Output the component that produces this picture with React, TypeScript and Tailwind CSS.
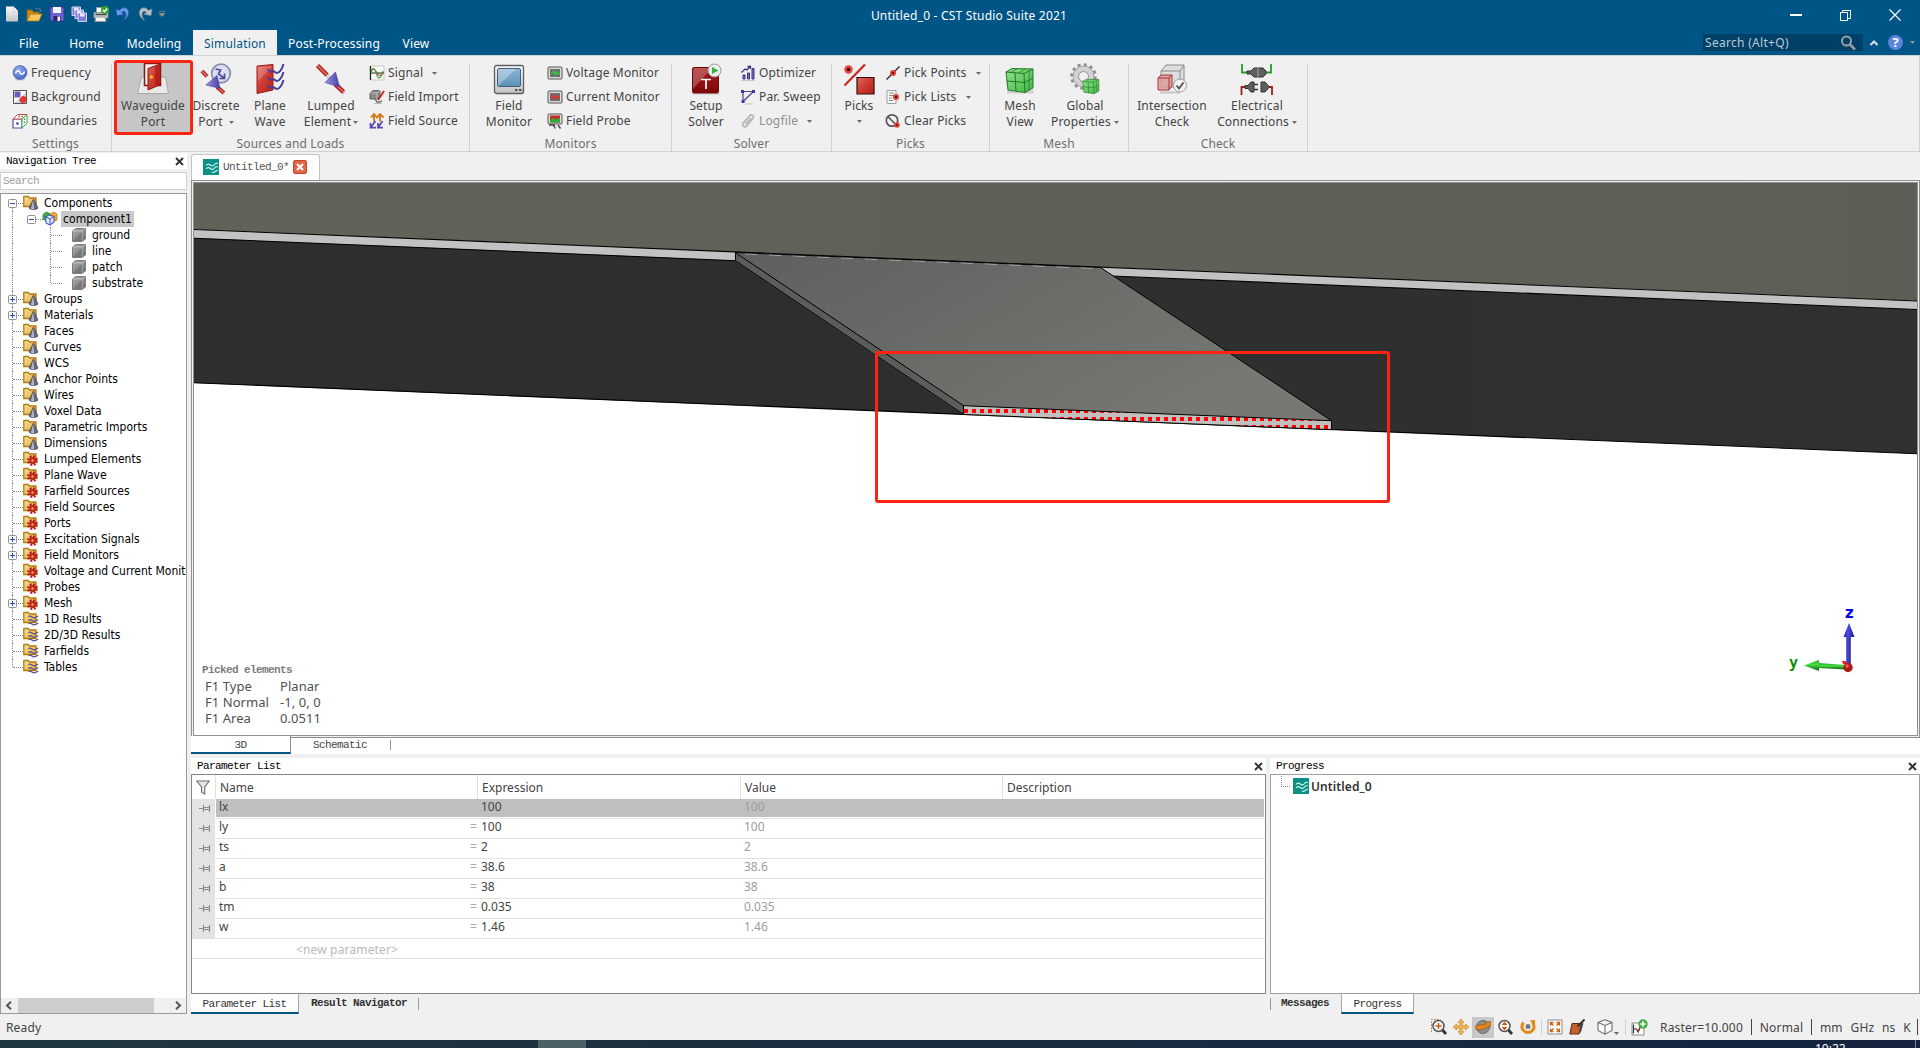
import React, { ReactNode } from "react";

const UI = "font-['Noto_Sans','Noto_Sans_CJK_SC',sans-serif]";
const MONO = "font-['Liberation_Mono','Noto_Sans_CJK_SC',monospace] text-[11px] tracking-[-0.6px]";
const TREE = "font-['DejaVu_Sans_Condensed','DejaVu_Sans',sans-serif] text-[12px]";

function Defs() {
  return (
    <svg className="absolute h-0 w-0">
      <defs>
        <linearGradient id="red" x1="0" y1="0" x2="1" y2="1">
          <stop offset="0" stopColor="#dd6a62" />
          <stop offset=".5" stopColor="#cc3a30" />
          <stop offset="1" stopColor="#b3221c" />
        </linearGradient>
        <linearGradient id="darkred" x1="0" y1="0" x2="0" y2="1">
          <stop offset="0" stopColor="#a81a1a" />
          <stop offset="1" stopColor="#7d0808" />
        </linearGradient>
        <linearGradient id="folder" x1="0" y1="0" x2="1" y2="1">
          <stop offset="0" stopColor="#fbe3a0" />
          <stop offset="1" stopColor="#e0a63a" />
        </linearGradient>
        <linearGradient id="screen" x1="0" y1="0" x2="0" y2="1">
          <stop offset="0" stopColor="#8fb4d6" />
          <stop offset="1" stopColor="#5a92b4" />
        </linearGradient>
        <linearGradient id="gray" x1="0" y1="0" x2="0" y2="1">
          <stop offset="0" stopColor="#fafafa" />
          <stop offset="1" stopColor="#c4c4c4" />
        </linearGradient>
        <linearGradient id="green" x1="0" y1="0" x2="1" y2="1">
          <stop offset="0" stopColor="#8fe28f" />
          <stop offset="1" stopColor="#45b545" />
        </linearGradient>
        <linearGradient id="cone" x1="0" y1="0" x2="1" y2="0">
          <stop offset="0" stopColor="#9a94e0" />
          <stop offset="1" stopColor="#4a3fa8" />
        </linearGradient>
        <radialGradient id="orb" cx="0.4" cy="0.3" r="0.8">
          <stop offset="0" stopColor="#93acf0" />
          <stop offset="1" stopColor="#3d5fc0" />
        </radialGradient>
        <linearGradient id="darkcube" x1="0" y1="0" x2="1" y2="1">
          <stop offset="0" stopColor="#b0b0b0" />
          <stop offset="1" stopColor="#6c6c6c" />
        </linearGradient>
      </defs>
    </svg>
  );
}

function Ico({ s = 16, children }: { s?: number; children: ReactNode }) {
  return (
    <svg width={s} height={s} viewBox={`0 0 ${s} ${s}`} fill="none" className="block shrink-0">
      {children}
    </svg>
  );
}

function Caret({ className = "" }: { className?: string }) {
  return (
    <svg width="5" height="3" viewBox="0 0 5 3" className={`block shrink-0 ${className}`}>
      <path d="M0 0h5L2.500 3z" fill="#6b6b6b" />
    </svg>
  );
}

/* ---------- quick access icons ---------- */
const IcNew = (
  <Ico>
    <path d="M2 .5h7.500L14 5v10.500H2z" fill="url(#gray)" />
    <path d="M9.500.5V5H14z" fill="#fff" stroke="#aaa" strokeWidth=".5" />
  </Ico>
);
const IcOpen = (
  <Ico s={17}>
    <path d="M1 15V4h5l1.500 2H13v3" fill="#c98a16" stroke="#8f6210" strokeWidth=".8" />
    <path d="M1 15 4.500 8H16l-3 7z" fill="#f6c65a" stroke="#a87412" strokeWidth=".8" />
    <path d="M9.500 3.500c2-2.500 4.500-1.500 5 1" stroke="#4a6f94" strokeWidth="1.300" />
    <path d="M13 4h3.500l-2 2.500z" fill="#4a6f94" />
  </Ico>
);
const IcSave = (
  <Ico>
    <path d="M1 1h14v14H2.500L1 13.500z" fill="#6a63d4" stroke="#3a3490" />
    <path d="M4 1h8v6H4z" fill="#f4f4ff" />
    <path d="M4.500 10h7v5h-7z" fill="#2c2868" />
    <path d="M8.500 10.500h2.500V15H8.500z" fill="#f2f2f2" />
  </Ico>
);
const IcSaveAll = (
  <Ico>
    {[0, 3, 6].map((o) => (
      <g key={o} transform={`translate(${o} ${o})`}>
        <path d="M1 1h8.500v8.500H1z" fill="#827bd8" stroke="#e3e3f4" strokeWidth=".9" />
        <path d="M3 1.500h4.500v3H3z" fill="#e9e9fb" />
      </g>
    ))}
  </Ico>
);
const IcPrint = (
  <Ico>
    <path d="M3.500 6V1.500h7V6" fill="#fff" stroke="#999" />
    <path d="M1 6.500h14v5.500H1z" fill="#cfcfcf" stroke="#8d8d8d" />
    <path d="M3 11h9l1 4.500H2z" fill="#f5f5f5" stroke="#9a9a9a" />
    <path d="M2.500 8.500h11" stroke="#444" strokeWidth="1.500" />
    <circle cx="12" cy="4" r="4" fill="#32a832" />
    <path d="m10 4 1.500 1.700L14.200 2.500" stroke="#fff" strokeWidth="1.500" />
  </Ico>
);
const IcUndo = (
  <Ico>
    <path d="M4.500 4.500C8-.5 14.500 2 13.500 8c-.6 3-2.700 5-5 6.500 1.400-2 2.800-4 2.400-6.700C10.500 4.500 7.800 4.500 6.500 6.500L9 8.300 2 9.500 1 3z" fill="#6b9af0" stroke="#2f5cb4" strokeWidth=".7" />
  </Ico>
);
const IcRedo = (
  <Ico>
    <path d="M11.500 4.500C8-.5 1.500 2 2.500 8c.6 3 2.700 5 5 6.500-1.400-2-2.800-4-2.400-6.700C5.500 4.500 8.200 4.500 9.500 6.500L7 8.300 14 9.500 15 3z" fill="#b9c0c4" stroke="#7e8a90" strokeWidth=".7" />
  </Ico>
);

/* ---------- small ribbon icons ---------- */
const IcFrequency = (
  <Ico>
    <ellipse cx="8" cy="14.500" rx="6" ry="1.200" fill="#ccc" />
    <circle cx="8" cy="7.500" r="7" fill="url(#orb)" stroke="#4a62ad" strokeWidth=".7" />
    <path d="M3.500 8.500C4.500 5 7 5 8 7.500s3.500 2.500 4.500-1" stroke="#fff" strokeWidth="1.500" />
  </Ico>
);
const IcBackground = (
  <Ico>
    <path d="M1.500 1.500h13v13h-13z" fill="#fff" stroke="#555" />
    <path d="M2.500 2.500h6v6h-6z" fill="#6660b8" />
    <path d="M2 14 14 2v7l-5 5z" fill="#cfcfe2" />
    <circle cx="11" cy="10.500" r="3.500" fill="#e03a30" />
    <path d="M3 13.500 13.500 3" stroke="#fff" />
  </Ico>
);
const IcBoundaries = (
  <Ico>
    <path d="M1 6h9v9H1z" fill="#fff" stroke="#5b50b4" strokeWidth="1.200" />
    <path d="M1 6 5.500 1.500H15L10 6z" fill="#fff" stroke="#c24a48" />
    <path d="M10 6l5-4.500V10l-5 5z" fill="#fff" stroke="#3fa048" />
    <path d="M4.300 9.300h2.400v2.400H4.300z" fill="#4a3fae" />
    <path d="M6.500 3.500h1.500M9.500 3.500H11" stroke="#d04040" strokeWidth="1.400" />
    <path d="M12.500 5.500v1.600M12.500 8.500v1.600" stroke="#2f9a3a" strokeWidth="1.400" />
  </Ico>
);
const IcSignal = (
  <Ico>
    <path d="M1 1h14v14H1z" fill="#f7f7f7" stroke="#c9c9c9" />
    <path d="M1.500 1v14M1 8h14" stroke="#222" strokeWidth="1.200" />
    <path d="M2 6c2-5 4-1 6 2s4 4 6.500-1" stroke="#c8302c" strokeWidth="1.200" />
    <path d="M2 8c2-6 4-5 5.500 1S12 14 14 6" stroke="#3fa845" strokeWidth="1.200" />
  </Ico>
);
const IcFieldImport = (
  <Ico>
    <path d="M1 4 4 1.500h7V7L8 10H1z" fill="#8b8b8b" stroke="#4f4f4f" strokeWidth=".8" />
    <path d="M1 4h7v6M8 4l3-2.500" stroke="#c9c9c9" strokeWidth=".8" />
    <path d="m15 2-6 9" stroke="#c0292b" strokeWidth="2" />
    <path d="m5.500 9.500 3 4L13 12" stroke="#7a7a7a" strokeWidth="1.500" />
    <path d="M5 14.500h8" stroke="#bbb" />
  </Ico>
);
const IcFieldSource = (
  <Ico>
    <path d="M5 8.500V2M11 8.500V2M2 4.500 5 1l3 3.500L11 1l3.500 3.500" stroke="#d67a1c" strokeWidth="1.900" />
    <path d="M6.500 8 2 14M1.500 10v4.700H7M13.500 8 9.500 14M9 10v4.700h5" stroke="#5a45b8" strokeWidth="1.700" />
  </Ico>
);
function MonitorSmall({ color, probe }: { color: string; probe?: boolean }) {
  return (
    <Ico>
      <rect x="1" y={probe ? 1 : 2} width="14" height={probe ? 10 : 12} rx="1" fill="#dcdcdc" stroke="#555" />
      <rect x="3" y={probe ? 2.500 : 4} width="10" height={probe ? 7 : 8} fill={probe ? "#c42b2b" : "#6d6d6d"} />
      {probe && <path d="M3 9.500V7l3-2 3 1.500L13 5v4.500z" fill="#2cae39" />}
      {!probe && <path d="M3.500 8.500 5.500 8l1.500-2 1 4 1.500-3 1 1.500h2.500" stroke={color} strokeWidth="1.300" />}
      {probe && <path d="M2 12h6M6.500 12.500l2 3M11 12l2.500 3.500" stroke="#444" strokeWidth="1.300" />}
    </Ico>
  );
}
const IcOptimizer = (
  <Ico>
    <path d="M1 15.500h14" stroke="#c9c9c9" />
    <path d="M3 10h2v4H3zM7.500 8h2v6h-2zM12 3.500h2V14h-2z" fill="#7d78cf" stroke="#38307f" />
    <path d="M1.500 7.500 5 4l2 1 3-3.500M7.500 1.500H10.500V4" stroke="#3a3180" strokeWidth="1.300" />
  </Ico>
);
const IcSweep = (
  <Ico>
    <path d="M2.500 2.500h11L3 12.500V2.500" stroke="#4a4688" strokeWidth="1.200" />
    <path d="M1 1h3v3H1zM12 1h3v3h-3zM1.500 11h3v3h-3z" fill="#3f37b0" />
    <path d="M5 15h8" stroke="#c4c4c4" />
  </Ico>
);
const IcClip = (
  <Ico>
    <path d="m4 9.500 6-7c1.500-1.500 4.500.5 3 2.700L6.800 13c-1.800 2-5.500 0-3.800-2.800L8.500 4M5.500 11.500l5.500-6.500" stroke="#b1b1b1" strokeWidth="1.500" />
  </Ico>
);
const IcPickPoints = (
  <Ico>
    <path d="M1.500 14.500 14.500 1.500" stroke="#222" strokeWidth="1.300" />
    <circle cx="8" cy="8" r="3" fill="#e2453c" />
    <circle cx="8" cy="8" r="1.200" fill="#7a0c0c" />
  </Ico>
);
const IcPickLists = (
  <Ico>
    <path d="M2 1.500h9v13H2z" fill="#fafafa" stroke="#9d9d9d" />
    <path d="M4 4h5M4 6.500h5M4 9h3M4 11.500h4" stroke="#8b8b8b" />
    <circle cx="11" cy="8" r="3" fill="#e2453c" />
    <circle cx="11" cy="8" r="1.200" fill="#6a0c0c" />
  </Ico>
);
const IcClearPicks = (
  <Ico>
    <circle cx="7" cy="7.500" r="5.700" fill="#f2f2f2" stroke="#555" strokeWidth="1.700" />
    <path d="m3 3.500 8 8.500" stroke="#555" strokeWidth="1.600" />
    <circle cx="12" cy="12" r="2.800" fill="#e2453c" />
    <circle cx="12" cy="12" r="1" fill="#6a0c0c" />
  </Ico>
);

/* ---------- large ribbon icons ---------- */
const BigPort = (
  <Ico s={32}>
    <path d="M4.500 14h24l3 16.500h-31z" fill="#e9e9e9" stroke="#a9a9a9" />
    <path d="M7.500.5h16v22h-16z" fill="#f7f1ef" stroke="#8e1512" strokeWidth="1.500" />
    <path d="M23.500 1v20.500L11 27V5.500z" fill="url(#red)" stroke="#8e1512" />
    <path d="M23 1.500v20l-5 2V3.500z" fill="#a81612" opacity=".6" />
    <circle cx="14.500" cy="14" r="1.700" fill="#f6c514" />
  </Ico>
);
const BigDiscrete = (
  <Ico s={32}>
    <circle cx="21" cy="10.500" r="9.300" fill="#dcdff0" stroke="#8b8fae" strokeWidth="1.800" />
    <path d="m15.500 6 5 1-2 4 5.500 4M24.500 10.500V15.500h-5" stroke="#4c49a0" strokeWidth="1.700" />
    <g transform="translate(0 5)">
      <path d="m2 3 5 5.500M17 19l7 6" stroke="#b3221c" strokeWidth="4" />
      <path d="m2 3 5 5.500M17 19l7 6" stroke="#e2736e" strokeWidth="1.300" />
      <path d="M17 7.500 6 17l14 3.500z" fill="url(#cone)" stroke="#413a8f" strokeWidth=".6" />
    </g>
  </Ico>
);
const BigPlane = (
  <Ico s={32}>
    <path d="M3 3 19 1.500V27L3 30.500z" fill="url(#red)" stroke="#9d1c17" />
    <path d="m4 18 14-14v-1L4 4z" fill="#fff" opacity=".2" />
    {[0, 8, 16].map((y) => (
      <path key={y} d={`M14 ${y + 6}c2 6 4 0 7 3s7-2 8.500-8`} stroke="#473a9c" strokeWidth="1.900" />
    ))}
  </Ico>
);
const BigLumped = (
  <Ico s={32}>
    <path d="M2.500 3 28 29.500" stroke="#999" strokeWidth="4" opacity=".35" transform="translate(1.500 1)" />
    <path d="M2.500 2.500 12 12M20 21l8.500 8" stroke="#b3221c" strokeWidth="4.500" />
    <path d="M2.500 2.500 12 12M20 21l8.500 8" stroke="#e2736e" strokeWidth="1.500" />
    <path d="M20.500 9 10 19.500l14.500 4.500z" fill="url(#cone)" stroke="#413a8f" strokeWidth=".6" />
  </Ico>
);
const BigMonitor = (
  <Ico s={32}>
    <rect x="1.500" y="2.500" width="29" height="28" rx="2" fill="url(#gray)" stroke="#5e5e5e" strokeWidth="1.300" />
    <rect x="4.500" y="5.500" width="23" height="18" rx="1.500" fill="url(#screen)" stroke="#44607a" />
    <path d="M5 23 23 6H6L5 7z" fill="#fff" opacity=".3" />
    <path d="M22 27h2.500M26 27h2.500" stroke="#555" strokeWidth="2" />
  </Ico>
);
const BigSolver = (
  <Ico s={32}>
    <path d="M2 31h28" stroke="#ddd" strokeWidth="2" />
    <rect x="2.500" y="4.500" width="26" height="25.500" rx="1.500" fill="url(#darkred)" stroke="#6c0808" />
    <path d="M3 26 22 5H4L3 6z" fill="#fff" opacity=".25" />
    <path d="M11 16.500h10M16 16.500v9.500" stroke="#fff" strokeWidth="1.700" />
    <circle cx="24.500" cy="7.500" r="6.500" fill="#eee" stroke="#9a9a9a" />
    <path d="M22 4v7l6.500-3.500z" fill="#2fb13a" />
  </Ico>
);
const BigPicks = (
  <Ico s={32}>
    <path d="M1.500 22.500 22 1.500" stroke="#c42c22" strokeWidth="2.300" />
    <circle cx="5.500" cy="6.500" r="4.200" fill="#e2453c" />
    <circle cx="5.500" cy="6.500" r="1.700" fill="#330606" />
    <path d="M14 14.500h17v16.500H14z" fill="url(#red)" stroke="#2b1010" strokeWidth="1.200" />
  </Ico>
);
const MeshCube = (
  <g>
    <path d="m2 9 6-3.500 21 .5V25l-8 4.500L4 27z" fill="url(#green)" stroke="#1d7a22" />
    <path d="m2 9 18 1.500L29 6M20 10.500l1 19M11 9.800l1 18.500M3 18l17.500 1.500L29 15" stroke="#1d7a22" />
    <path d="M13 6 7 9.300M21 6l-6 4M25 8v19" stroke="#1d7a22" strokeWidth=".7" />
  </g>
);
const BigMesh = (
  <Ico s={32}>
    <path d="M3 29h27" stroke="#cfcfcf" strokeWidth="3" />
    {MeshCube}
  </Ico>
);
const BigGlobal = (
  <Ico s={32}>
    <circle cx="14.500" cy="13.500" r="11.500" stroke="#8f8f8f" strokeWidth="3.600" strokeDasharray="3 3" />
    <circle cx="14.500" cy="13.500" r="7.800" stroke="#d2d2d2" strokeWidth="5.500" />
    <circle cx="14.500" cy="13.500" r="10.500" stroke="#a4a4a4" />
    <circle cx="14.500" cy="13.500" r="5" fill="#f0f0f0" stroke="#8f8f8f" />
    <g transform="translate(12.500 13) scale(.6)">{MeshCube}</g>
  </Ico>
);
const BigIntersect = (
  <Ico s={32}>
    <path d="m5 8 5-6h18v17l-4 5H5z" fill="#dedede" stroke="#8a8a8a" />
    <path d="M5 8h19v16M24 8l4-6" stroke="#8a8a8a" />
    <path d="m2 15 3-3h11v11l-3 4H2z" fill="#d99a9a" fillOpacity=".8" stroke="#a33" />
    <path d="M2 15h11v12M13 15l3-3" stroke="#a33" />
    <path d="M4 29.500h20" stroke="#c6c6c6" strokeWidth="2" />
    <circle cx="24" cy="22.500" r="6.500" fill="#f3f3f3" stroke="#9a9a9a" />
    <path d="m20.500 22.500 2.500 3 4.500-6" stroke="#555" strokeWidth="1.900" />
  </Ico>
);
const BigElectrical = (
  <Ico s={34}>
    <path d="M2 1v8.500h6M31 1v8.500h-6" stroke="#23a02c" strokeWidth="1.800" />
    <path d="M7 8h4l3-3h9l3 3v3l-3 3h-9l-3-3H7z" fill="#5e5e5e" stroke="#333" />
    <path d="M18 5v9" stroke="#a8a8a8" />
    <path d="M1.500 32v-8H6M32 32v-8h-3" stroke="#a31c1c" strokeWidth="1.800" />
    <path d="M5 22.500h3L11 19h3v10h-3l-3-3.500H5zM21 19h4l4.500 5-4.500 5h-4z" fill="#5e5e5e" stroke="#333" />
    <path d="M14 21.500h4M14 26.500h4" stroke="#333" strokeWidth="1.600" />
  </Ico>
);

/* ---------- ribbon building blocks ---------- */
function Big({ w, icon, a, b, caret }: { w: string; icon: ReactNode; a: string; b?: string; caret?: string }) {
  return (
    <div className={`flex shrink-0 flex-col items-center ${w}`}>
      <div className="flex h-[35px] items-start">{icon}</div>
      <div className="h-4 whitespace-nowrap leading-4">{a}</div>
      <div className="flex h-4 items-center whitespace-nowrap leading-4">
        {b}
        {caret && <Caret className={caret} />}
      </div>
    </div>
  );
}

function Small({ icon, label, caret, dim }: { icon: ReactNode; label: string; caret?: string; dim?: boolean }) {
  return (
    <div className={`flex h-6 items-center whitespace-nowrap ${dim ? "text-[#8e8e8e]" : ""}`}>
      {icon}
      <span className="ml-[3px]">{label}</span>
      {caret && <Caret className={caret} />}
    </div>
  );
}

function Group({ w, label, children }: { w: string; label: string; children: ReactNode }) {
  return (
    <div className={`flex shrink-0 flex-col pt-[7px] ${w}`}>
      <div className="flex h-[73px] border-r border-[#d2d2d2]">{children}</div>
      <div className="flex h-[17px] items-center justify-center border-r border-[#d2d2d2] pt-[2px] text-[#6e6e6e]">{label}</div>
    </div>
  );
}

function Ribbon() {
  return (
    <div className="relative flex h-[97px] border-b border-r border-t border-[#d2d2d2] bg-[#f0f0f0] text-[12px] tracking-[0.15px] text-[#444]">
      <Group w="w-[112px]" label="Settings">
        <div className="-mt-[2px] pl-[12px]">
          <Small icon={IcFrequency} label="Frequency" />
          <Small icon={IcBackground} label="Background" />
          <Small icon={IcBoundaries} label="Boundaries" />
        </div>
      </Group>
      <Group w="w-[358px]" label="Sources and Loads">
        <div className="relative flex w-[80px] shrink-0 justify-center pl-[2px]">
          <div className="absolute -top-[3px] left-[2px] h-[75px] w-[79px] rounded-[3px] border-[3px] border-[#fb2410] bg-[#c6c6c6]" />
          <div className="relative">
            <Big w="w-[76px]" icon={BigPort} a="Waveguide" b="Port" />
          </div>
        </div>
        <Big w="w-[48px]" icon={BigDiscrete} a="Discrete" b="Port" caret="ml-[6px]" />
        <Big w="w-[60px]" icon={BigPlane} a="Plane" b="Wave" />
        <Big w="w-[62px]" icon={BigLumped} a="Lumped" b="Element" caret="ml-[2px]" />
        <div className="-mt-[2px] pl-[7px]">
          <Small icon={IcSignal} label="Signal" caret="ml-[9px]" />
          <Small icon={IcFieldImport} label="Field Import" />
          <Small icon={IcFieldSource} label="Field Source" />
        </div>
      </Group>
      <Group w="w-[202px]" label="Monitors">
        <Big w="w-[78px]" icon={BigMonitor} a="Field" b="Monitor" />
        <div className="-ml-px -mt-[2px]">
          <Small icon={<MonitorSmall color="#2ed03a" />} label="Voltage Monitor" />
          <Small icon={<MonitorSmall color="#ee2b2b" />} label="Current Monitor" />
          <Small icon={<MonitorSmall color="#2ed03a" probe />} label="Field Probe" />
        </div>
      </Group>
      <Group w="w-[160px]" label="Solver">
        <Big w="w-[68px]" icon={BigSolver} a="Setup" b="Solver" />
        <div className="-mt-[2px]">
          <Small icon={IcOptimizer} label="Optimizer" />
          <Small icon={IcSweep} label="Par. Sweep" />
          <Small icon={IcClip} label="Logfile" caret="ml-[9px]" dim />
        </div>
      </Group>
      <Group w="w-[158px]" label="Picks">
        <Big w="w-[54px]" icon={BigPicks} a="Picks" caret="mt-[-1px]" />
        <div className="-ml-px -mt-[2px]">
          <Small icon={IcPickPoints} label="Pick Points" caret="ml-[10px]" />
          <Small icon={IcPickLists} label="Pick Lists" caret="ml-[10px]" />
          <Small icon={IcClearPicks} label="Clear Picks" />
        </div>
      </Group>
      <Group w="w-[139px]" label="Mesh">
        <Big w="w-[60px]" icon={BigMesh} a="Mesh" b="View" />
        <Big w="w-[70px]" icon={BigGlobal} a="Global" b="Properties" caret="ml-[3px]" />
      </Group>
      <Group w="w-[179px]" label="Check">
        <Big w="w-[86px]" icon={BigIntersect} a="Intersection" b="Check" />
        <Big w="w-[84px]" icon={BigElectrical} a="Electrical" b="Connections" caret="ml-[3px]" />
      </Group>
    </div>
  );
}

/* ---------- title bar and menu tabs ---------- */
function Header() {
  const tab = "flex h-[25px] items-center justify-center pt-[2px]";
  return (
    <div className="bg-[#005587] text-white">
      <div className="relative flex h-[30px] items-center pl-[4px]">
        <div className="flex w-[170px] items-center gap-[6px] pb-[2px]">
          {IcNew}
          {IcOpen}
          {IcSave}
          {IcSaveAll}
          {IcPrint}
          {IcUndo}
          {IcRedo}
          <svg width="6" height="6" viewBox="0 0 6 6" className="block shrink-0">
            <path d="M0 .5h6M0 2.500h6L3 5.500z" fill="#9c9488" stroke="#9c9488" strokeWidth=".6" />
          </svg>
        </div>
        <div className="absolute inset-x-0 top-0 flex h-[31px] items-center justify-center text-[12px] tracking-[0.2px]">
          <span className="pl-[18px]">Untitled_0 - CST Studio Suite 2021</span>
        </div>
        <div className="ml-auto flex items-center gap-[37px] pb-px pr-[19px]">
          <svg width="12" height="12" viewBox="0 0 12 12"><path d="M0 6h12" stroke="#fff" strokeWidth="2" /></svg>
          <svg width="13" height="12" viewBox="0 0 13 12" fill="none" stroke="#fff">
            <path d="M1.500 3.500h7v8h-7zM3.500 3V1.500h8V9.500H9" />
          </svg>
          <svg width="12" height="12" viewBox="0 0 12 12"><path d="m.5.5 11 11m0-11-11 11" stroke="#fff" strokeWidth="1.200" /></svg>
        </div>
      </div>
      <div className="flex h-[25px] text-[12px] tracking-[0.15px]">
        <div className={`${tab} w-[58px]`}>File</div>
        <div className={`${tab} w-[57px]`}>Home</div>
        <div className={`${tab} w-[78px]`}>Modeling</div>
        <div className={`${tab} w-[84px] bg-[#f0f0f0] text-[#005587]`}>Simulation</div>
        <div className={`${tab} w-[114px]`}>Post-Processing</div>
        <div className={`${tab} w-[50px]`}>View</div>
        <div className="ml-auto flex items-center pr-[5px]">
          <div className="flex h-[17px] w-[160px] items-center justify-between bg-[#003f66] pl-[2px] pr-[7px] tracking-[0.3px] text-[#b9cbd8]">
            <span className="pt-px">Search (Alt+Q)</span>
            <Ico>
              <circle cx="6.500" cy="6" r="4.500" stroke="#95a0a8" strokeWidth="2" />
              <path d="m10 9.500 5 5" stroke="#95a0a8" strokeWidth="2.500" />
            </Ico>
          </div>
          <svg width="10" height="8" viewBox="0 0 10 8" fill="none" className="ml-[6px]">
            <path d="M1.500 6 5 2.500 8.500 6" stroke="#d4dbe0" strokeWidth="2.200" />
          </svg>
          <div className="ml-[9px] flex h-[15px] w-[15px] items-center justify-center rounded-full bg-[#5a86dc] text-[13px] font-bold tracking-normal text-white">?</div>
          <svg width="5" height="3" viewBox="0 0 5 3" className="ml-[7px]"><path d="M0 0h5L2.500 3z" fill="#9c9488" /></svg>
        </div>
      </div>
    </div>
  );
}

/* ---------- navigation tree ---------- */
type Kind = "cone" | "gear" | "wave";
const TREE_ROWS: { label: string; kind: Kind; plus?: boolean }[] = [
  { label: "Groups", kind: "cone", plus: true },
  { label: "Materials", kind: "cone", plus: true },
  { label: "Faces", kind: "cone" },
  { label: "Curves", kind: "cone" },
  { label: "WCS", kind: "cone" },
  { label: "Anchor Points", kind: "cone" },
  { label: "Wires", kind: "cone" },
  { label: "Voxel Data", kind: "cone" },
  { label: "Parametric Imports", kind: "cone" },
  { label: "Dimensions", kind: "cone" },
  { label: "Lumped Elements", kind: "gear" },
  { label: "Plane Wave", kind: "gear" },
  { label: "Farfield Sources", kind: "gear" },
  { label: "Field Sources", kind: "gear" },
  { label: "Ports", kind: "gear" },
  { label: "Excitation Signals", kind: "gear", plus: true },
  { label: "Field Monitors", kind: "gear", plus: true },
  { label: "Voltage and Current Monitors", kind: "gear" },
  { label: "Probes", kind: "gear" },
  { label: "Mesh", kind: "gear", plus: true },
  { label: "1D Results", kind: "wave" },
  { label: "2D/3D Results", kind: "wave" },
  { label: "Farfields", kind: "wave" },
  { label: "Tables", kind: "wave" },
];

function Folder({ kind }: { kind: Kind }) {
  return (
    <Ico>
      <path d="M.8 11.500V1.500h4.500l1 1.500H13v8.500z" fill="url(#folder)" stroke="#b47c12" strokeWidth="1.300" />
      {kind === "cone" && (
        <g>
          <path d="M10.500 4 6 13c1.500 2 7.500 2 9 0z" fill="#6c6c7e" stroke="#3c3c46" strokeWidth=".7" />
          <path d="M10.300 5 8 13.800c1 .6 2.200.6 3 .5z" fill="#b9b9d6" />
        </g>
      )}
      {kind === "gear" && (
        <g>
          <circle cx="9.500" cy="9.500" r="4.200" stroke="#b21a16" strokeWidth="2.400" strokeDasharray="1.900 1.400" />
          <circle cx="9.500" cy="9.500" r="3.400" fill="#c4221c" />
          <circle cx="9.500" cy="9.500" r="1.200" fill="#f0b060" />
        </g>
      )}
      {kind === "wave" &&
        [5.500, 9, 12.500].map((y) => (
          <path key={y} d={`M5.500 ${y + 0.500}c1.200-1.500 2.400-.8 3.700.2s3 1 6-1.200`} stroke="#5a5490" strokeWidth="1.200" />
        ))}
    </Ico>
  );
}

function Cube() {
  return (
    <Ico>
      <path d="M1.500 4 5 1.500h9.500V12L11 14.500H1.500z" fill="url(#darkcube)" stroke="#7d7d7d" />
      <path d="M1.500 4H11v10.500M11 4l3.500-2.500" stroke="#c9c9c9" strokeWidth=".8" />
      <path d="M2 13.500 11 5v9H2z" fill="#6e6e6e" opacity=".6" />
    </Ico>
  );
}

function Expander({ open, className }: { open?: boolean; className: string }) {
  return (
    <svg width="9" height="9" viewBox="0 0 9 9" className={`absolute ${className}`}>
      <rect x=".5" y=".5" width="8" height="8" rx="1" fill="#fafafa" stroke="#919191" />
      <path d={open ? "M2 4.500h5" : "M2 4.500h5M4.500 2v5"} stroke="#2f4f9e" />
    </svg>
  );
}

const DOT = "border-dotted border-[#8a8a8a]";

function TreeRow({ label, kind, plus, open, first, last }: { label: string; kind: Kind; plus?: boolean; open?: boolean; first?: boolean; last?: boolean }) {
  return (
    <div className="flex h-4 items-center whitespace-nowrap">
      <div className="relative h-4 w-[22px] shrink-0">
        <div className={`absolute left-[11px] border-l ${DOT} ${last ? "top-0 h-2" : first ? "top-2 h-2" : "top-0 h-4"}`} />
        <div className={`absolute left-[12px] top-2 w-[10px] border-t ${DOT}`} />
        {(plus || open) && <Expander open={open} className="left-[7px] top-[4px]" />}
      </div>
      <Folder kind={kind} />
      <span className="ml-[5px]">{label}</span>
    </div>
  );
}

function PanelTitle({ text, pl }: { text: string; pl: string }) {
  return (
    <div className={`flex h-4 shrink-0 items-center justify-between bg-white pr-[3px] text-black ${pl} ${MONO}`}>
      <span className="pt-px">{text}</span>
      <svg width="9" height="9" viewBox="0 0 9 9"><path d="m1 1 7 7m0-7L1 8" stroke="#333" strokeWidth="1.900" /></svg>
    </div>
  );
}

function Navigation() {
  return (
    <div className="flex w-[187px] shrink-0 flex-col pt-px">
      <PanelTitle text="Navigation Tree" pl="pl-[6px]" />
      <div className={`mb-[3px] mt-[3px] flex h-[18px] shrink-0 items-center border border-[#d0d0d0] bg-white pl-[2px] text-[#9b9b9b] ${MONO}`}>Search</div>
      <div className={`flex min-h-0 flex-1 flex-col border border-[#9a9a9a] bg-white text-black ${TREE}`}>
        <div className="min-h-0 flex-1 overflow-hidden pt-px">
          <TreeRow label="Components" kind="cone" open first />
          <div className="flex h-4 items-center">
            <div className="relative h-4 w-[41px] shrink-0">
              <div className={`absolute left-[11px] top-0 h-4 border-l ${DOT}`} />
              <div className={`absolute left-[30px] top-2 w-[12px] border-t ${DOT}`} />
              <Expander open className="left-[26px] top-[4px]" />
            </div>
            <Ico>
              <path d="M1 3.500 4 1l4 1.500v6L4 10 1 8z" fill="#3cae42" stroke="#1f7d28" strokeWidth=".7" />
              <path d="m8 3 4-2 3 2v6l-4 2-3-2z" fill="#f2a52c" stroke="#b87414" strokeWidth=".7" />
              <path d="M3.500 6 7 4l5 1.500V11L8 14l-4-2z" fill="#dfe6fb" stroke="#3f5fc4" strokeWidth="1.100" />
              <path d="m3.500 6 4.500 2 4-2.500M8 8v6" stroke="#3f5fc4" />
            </Ico>
            <span className="ml-[3px] flex h-4 items-center bg-[#c8c8c8] px-[2px] tracking-[0.1px]">component1</span>
          </div>
          {["ground", "line", "patch", "substrate"].map((n, i) => (
            <div key={n} className="flex h-4 items-center">
              <div className="relative h-4 w-[70px] shrink-0">
                <div className={`absolute left-[11px] top-0 h-4 border-l ${DOT}`} />
                <div className={`absolute left-[49px] top-0 border-l ${DOT} ${i === 3 ? "h-2" : "h-4"}`} />
                <div className={`absolute left-[50px] top-2 w-[11px] border-t ${DOT}`} />
              </div>
              <Cube />
              <span className="ml-[5px]">{n}</span>
            </div>
          ))}
          {TREE_ROWS.map((r, i) => (
            <TreeRow key={r.label} {...r} last={i === TREE_ROWS.length - 1} />
          ))}
        </div>
        <div className="flex h-[15px] shrink-0 items-center bg-[#f0f0f0]">
          <svg width="17" height="9" viewBox="0 0 17 9" fill="none"><path d="m10 .8-4 3.700 4 3.700" stroke="#555" strokeWidth="2" /></svg>
          <div className="h-[15px] w-[136px] bg-[#cdcdcd]" />
          <svg width="32" height="9" viewBox="0 0 32 9" fill="none" className="ml-auto"><path d="m22 .8 4 3.700-4 3.700" stroke="#555" strokeWidth="2" /></svg>
        </div>
      </div>
    </div>
  );
}

/* ---------- 3D viewport ---------- */
function WaveLogo() {
  return (
    <svg width="16" height="16" viewBox="0 0 16 16" fill="none" className="block shrink-0">
      <path d="M0 0h16v16H0z" fill="#0a9087" />
      <path d="M3 6.500c1.500-2 3-1.500 4.500-.3s3 .8 4-.7 2-1.500 3.500-1M3 10c1.500-2 3-1.500 4.500-.3s3 .8 4-.7 2-1.500 3.500-1M9 13c1.500.8 2.500.3 3.300-.7s1.500-1 2.700-.8" stroke="#d5f3f0" strokeWidth="1.100" />
    </svg>
  );
}

function Scene() {
  return (
    <svg width="1723" height="552" viewBox="194 183 1723 552" className="absolute inset-0 block">
      <defs>
        <linearGradient id="top" x1="0" x2="1"><stop offset="0" stopColor="#626259" /><stop offset="1" stopColor="#5e5e57" /></linearGradient>
        <linearGradient id="dark" x1="0" x2="1"><stop offset="0" stopColor="#2d2f2e" /><stop offset=".52" stopColor="#2d2e2d" /><stop offset=".56" stopColor="#302f30" /><stop offset="1" stopColor="#313031" /></linearGradient>
        <linearGradient id="strip" x1="0" y1="0" x2="1" y2=".5"><stop offset="0" stopColor="#5f5f5e" /><stop offset="1" stopColor="#777872" /></linearGradient>
        <linearGradient id="zshaft" x1="0" x2="1"><stop offset="0" stopColor="#2020a0" /><stop offset=".4" stopColor="#4c4cf0" /><stop offset="1" stopColor="#14146a" /></linearGradient>
        <linearGradient id="yshaft" x1="0" y1="0" x2="0" y2="1"><stop offset="0" stopColor="#1e9a1e" /><stop offset=".4" stopColor="#45e045" /><stop offset="1" stopColor="#0e600e" /></linearGradient>
        <pattern id="stipple" x="964" y="409" width="8" height="8" patternUnits="userSpaceOnUse">
          <path d="M0 0h4v4H0z" fill="#f00" />
        </pattern>
      </defs>
      <path d="M194 183h1723v118L194 229.500z" fill="url(#top)" />
      <path d="M194 229.500 1917 301V309.500L194 238z" fill="#c2c2c2" />
      <path d="M194 238 1917 309.500V453.700L194 383z" fill="url(#dark)" />
      <path d="M194 229.500 1917 301M194 238.200 736 260.700M1112 276 1917 309.500M194 382.700 1917 453.700" stroke="#000" strokeWidth="1.100" fill="none" />
      <path d="m735.500 252.700 228 153-1 8.700-227-153z" fill="#5c5c5c" />
      <path d="m735.500 252.500 365 15L1331.500 420.700l-368-15z" fill="url(#strip)" />
      <path d="m745 253.800 350 14.500" stroke="#bdbdbd" strokeDasharray="12 12" />
      <path d="M963.500 405.700 1331.500 420.700v9l-368-15z" fill="#c0c0c0" />
      <path d="M963.500 405.700 1331.500 420.700v9l-368-15z" fill="url(#stipple)" shapeRendering="crispEdges" />
      <path d="m735.500 252.700 228 153v8.700l-228-153.700zM735.500 252.500l365 15L1331.500 420.700v9L963.500 414.400M963.500 405.700l368 15" stroke="#000" fill="none" />
      <g>
        <path d="M1846.300 637h4.400v30h-4.400z" fill="url(#zshaft)" />
        <path d="M1849 623 1854.500 637h-11z" fill="url(#zshaft)" />
        <path d="M1818 663l28 2v4.500l-28-1.500z" fill="url(#yshaft)" />
        <path d="m1804 665.500 15-5.500v11z" fill="url(#yshaft)" />
        <path d="M1842 661h4v3h-3z" fill="#e22" />
        <circle cx="1848" cy="667.500" r="4.700" fill="#b01818" />
        <circle cx="1847" cy="666" r="1.700" fill="#f06060" />
      </g>
    </svg>
  );
}

function Viewport() {
  const picked = [
    ["F1 Type", "Planar"],
    ["F1 Normal", "-1, 0, 0"],
    ["F1 Area", "0.0511"],
  ];
  return (
    <div className="h-[558px] shrink-0 border border-[#8f8f8f] bg-[#f0f0f0] p-px">
      <div className="relative h-full overflow-hidden border border-[#8f8f8f] bg-white">
        <Scene />
        <div className="absolute left-[681px] top-[168px] h-[152px] w-[515px] rounded-[3px] border-[3px] border-[#fb2410]" />
        <div className="absolute left-[8px] top-[479px] text-[#505050]">
          <div className={`h-[16px] pt-px font-bold leading-[15px] text-[#7b7b7b] ${MONO}`}>Picked elements</div>
          <div className="pl-[3px] text-[13px] tracking-[0.05px]">
            {picked.map(([k, v]) => (
              <div key={k} className="flex h-4 items-center leading-4">
                <span className="w-[75px]">{k}</span>
                <span>{v}</span>
              </div>
            ))}
          </div>
        </div>
        <span className="absolute left-[1651px] top-[420px] font-['DejaVu_Sans',sans-serif] text-[15px] font-bold leading-5 text-[#0000f5]">z</span>
        <span className="absolute left-[1595px] top-[470px] font-['DejaVu_Sans_Mono',monospace] text-[15px] font-bold leading-5 text-[#0a8f0a]">y</span>
      </div>
    </div>
  );
}

/* ---------- parameter list ---------- */
const PARAMS = [
  ["lx", "100"],
  ["ly", "100"],
  ["ts", "2"],
  ["a", "38.6"],
  ["b", "38"],
  ["tm", "0.035"],
  ["w", "1.46"],
];

function ParameterList() {
  return (
    <div className="flex w-[1075px] shrink-0 flex-col">
      <PanelTitle text="Parameter List" pl="pl-[6px]" />
      <div className="flex h-[220px] shrink-0 flex-col border border-[#85858f] bg-white text-[12px] text-[#444]">
        <div className="flex h-[24px] shrink-0">
          <div className="flex w-[24px] items-center border-r border-[#e0e0e0] pl-[4px]">
            <svg width="14" height="15" viewBox="0 0 14 15"><path d="M.7 1h12.600L8.700 7v7L5.500 12V7z" fill="#e6e6e6" stroke="#6f6f6f" strokeWidth="1.100" /></svg>
          </div>
          <div className="flex w-[262px] items-center border-r border-[#e0e0e0] pl-[4px] pt-[2px]">Name</div>
          <div className="flex w-[263px] items-center border-r border-[#e0e0e0] pl-[4px] pt-[2px]">Expression</div>
          <div className="flex w-[262px] items-center border-r border-[#e0e0e0] pl-[4px] pt-[2px]">Value</div>
          <div className="flex flex-1 items-center pl-[4px] pt-[2px]">Description</div>
        </div>
        {PARAMS.map(([n, v], i) => (
          <div key={n} className="flex h-5 shrink-0 border-b border-[#e2e2e2]">
            <div className="flex w-[23px] items-center bg-[#e3e3e3] pl-[7px]">
              <svg width="12" height="7" viewBox="0 0 12 7" fill="none"><path d="M0 3.500h4M4.500 0v7M10.500 0v7M4.500 2.500h6M4.500 4.500h6" stroke="#8a8a8a" strokeWidth="1.100" /></svg>
            </div>
            <div className={`mb-px ml-px flex flex-1 items-center pb-[3px] ${i === 0 ? "mr-px bg-[#bfbfbf]" : ""}`}>
              <span className="w-[254px] pl-[3px]">{n}</span>
              <span className="w-[11px] text-[#aaa]">{i === 0 ? "" : "="}</span>
              <span className="w-[263px]">{v}</span>
              <span className="text-[#9d9d9d]">{v}</span>
            </div>
          </div>
        ))}
        <div className="flex h-5 shrink-0 items-center border-b border-[#e2e2e2] pl-[104px] pt-[3px] tracking-[0.15px] text-[#b9b9b9]">&lt;new parameter&gt;</div>
      </div>
      <div className={`flex h-5 text-[#333] ${MONO}`}>
        <div className="flex w-[108px] items-center justify-center border-b-2 border-r border-b-[#005587] border-r-[#a8a8a8] bg-white pt-[2px]">Parameter List</div>
        <div className="flex h-[19px] items-center pl-[12px] font-bold">Result Navigator</div>
        <div className="ml-[11px] mt-[4px] h-[12px] w-px bg-[#999]" />
      </div>
    </div>
  );
}

function Progress() {
  return (
    <div className="flex min-w-0 flex-1 flex-col">
      <PanelTitle text="Progress" pl="pl-[6px]" />
      <div className="h-[220px] shrink-0 border border-[#a0a0a0] bg-white">
        <div className="flex pl-[10px]">
          <div className={`mt-[1px] h-[11px] w-[9px] border-b border-l ${DOT}`} />
          <div className="ml-[3px] mt-[3px]"><WaveLogo /></div>
          <span className="ml-[2px] mt-[4px] text-[12px] font-semibold leading-4 tracking-[0.1px] text-[#333]">Untitled_0</span>
        </div>
      </div>
      <div className={`flex h-5 text-[#333] ${MONO}`}>
        <div className="mt-[4px] h-[12px] w-px bg-[#999]" />
        <div className="flex h-[19px] w-[70px] items-center pl-[10px] font-bold">Messages</div>
        <div className="flex w-[73px] items-center justify-center border-x border-b-2 border-x-[#a8a8a8] border-b-[#005587] bg-white pt-[2px]">Progress</div>
      </div>
    </div>
  );
}

/* ---------- status bar ---------- */
function Lens({ zoom }: { zoom?: boolean }) {
  return (
    <Ico>
      {!zoom && <path d="M.5 13V.5h9" stroke="#c46a2a" strokeDasharray="1.500 1.500" />}
      <circle cx="7.500" cy="7" r="5.500" fill="#f5f5f5" stroke="#555" strokeWidth="1.500" />
      <path d="m11.500 11 3.500 4" stroke="#333" strokeWidth="2.800" />
      {zoom ? <path d="m7.500 2.500 2.800 3.500H4.700zM7.500 11.500l2.800-3.500H4.700z" fill="#cc5c14" /> : <path d="M7.500 4v6M4.500 7h6" stroke="#cc5c14" strokeWidth="1.300" />}
    </Ico>
  );
}

function StatusBar() {
  const bar = "h-4 w-px bg-[#444]";
  return (
    <div className="flex h-[26px] shrink-0 items-center bg-[#f0f0f0] text-[12px] tracking-[0.15px] text-[#444]">
      <span className="pl-[6px] pt-[2px]">Ready</span>
      <div className="ml-auto flex h-[26px] items-center">
        <Lens />
        <div className="ml-[6px]">
          <Ico>
            <path d="M8 0 11 3.500H9.200V6.800h3.300V5L16 8l-3.500 3V9.200H9.200v3.300H11L8 16l-3-3.500h1.800V9.200H3.500V11L0 8l3.500-3v1.800h3.300V3.500H5z" fill="#f3b45a" stroke="#c98a2e" strokeWidth=".7" />
          </Ico>
        </div>
        <div className="ml-[3px] flex h-[21px] w-[22px] items-center justify-center bg-[#c8c8c8]">
          <Ico>
            <circle cx="8" cy="8" r="6.500" fill="#8d8d8d" stroke="#555" strokeWidth=".8" />
            <path d="M.5 7.500C4 4.500 8 7 11 5L9.500 3.500l6-1L15 8.500l-1.500-1.500C10 10.500 5 11 1 10.500z" fill="#e8871c" stroke="#94500c" strokeWidth=".7" />
          </Ico>
        </div>
        <div className="ml-[3px]"><Lens zoom /></div>
        <div className="ml-[7px]">
          <Ico>
            <path d="M3.500 3.500C0 8 3 13.500 8 13.500s8-5.500 4.500-10" stroke="#e08a1c" strokeWidth="3" />
            <path d="M9.500 1.500 15 1v5.500z" fill="#e08a1c" />
            <circle cx="8" cy="7.500" r="2.500" fill="#777" />
          </Ico>
        </div>
        <div className="ml-[5px] h-[16px] w-px bg-[#d2d2d2]" />
        <div className="ml-[5px]">
          <Ico>
            <path d="M1 1h14v14H1z" fill="#fff" stroke="#8a8a8a" />
            <path d="m6.500 6.500-3-3m0 3v-3h3M9.500 6.500l3-3m0 3v-3h-3M6.500 9.500l-3 3m0-3v3h3M9.500 9.500l3 3m0-3v3h-3" stroke="#d0600e" strokeWidth="1.300" />
          </Ico>
        </div>
        <div className="ml-[6px]">
          <Ico>
            <path d="M3 4.500h9.500L10 15H.8z" fill="#c4622e" stroke="#5a2c14" />
            <path d="M10 15l2.500-10.500L14.500 4 12 13z" fill="#444" />
            <path d="M8.500 7.500 15.500.5" stroke="#333" strokeWidth="2" />
          </Ico>
        </div>
        <div className="ml-[12px] flex items-end">
          <Ico>
            <path d="M8 .8 15 3.500v8L8 15.200 1 11.500v-8zM1 3.500 8 6.500l7-3M8 6.500v8.700" fill="#fafafa" stroke="#707070" strokeWidth="1.100" />
          </Ico>
          <Caret className="ml-px" />
        </div>
        <div className="ml-[6px] h-[16px] w-px bg-[#d2d2d2]" />
        <div className="ml-[5px]">
          <Ico s={17}>
            <path d="M1 4h12v12H1z" fill="#fff" stroke="#8a8a8a" />
            <path d="M2.500 5.500v9M2.500 10l3 0 1.500 3 2-5" stroke="#333" strokeWidth="1.200" />
            <path d="m7 13 2-4" stroke="#c22" strokeWidth="1.300" />
            <circle cx="12" cy="5" r="4.700" fill="#3fae3f" />
            <path d="M12 2.200v5.600M9.200 5h5.600" stroke="#fff" strokeWidth="1.700" />
          </Ico>
        </div>
        <span className="ml-[12px] w-[91px] pt-px tracking-[0.2px]">Raster=10.000</span>
        <div className={bar} />
        <span className="w-[59px] pt-px text-center">Normal</span>
        <div className={bar} />
        <span className="w-[105px] pl-[8px] pt-px [word-spacing:4.500px]">mm GHz ns K</span>
        <div className={`mr-[2px] ${bar}`} />
      </div>
    </div>
  );
}

export default function App() {
  return (
    <div className={`flex h-[1048px] w-[1920px] flex-col overflow-hidden bg-[#f0f0f0] ${UI}`}>
      <Defs />
      <Header />
      <Ribbon />
      <div className="flex h-[862px] shrink-0">
        <Navigation />
        <div className="ml-[4px] flex min-w-0 flex-1 flex-col">
          <div className="flex h-[28px] shrink-0 pt-[2px]">
            <div className={`flex w-[129px] items-center rounded-t-[3px] border border-b-0 border-[#c4c4c4] bg-white pb-[2px] pl-[11px] text-[#555] ${MONO}`}>
              <WaveLogo />
              <span className="ml-[4px] pt-[2px]">Untitled_0*</span>
              <div className="ml-[4px] flex h-[14px] w-[14px] items-center justify-center rounded-[2px] border border-[#c9452a] bg-[#e0654a]">
                <svg width="8" height="8" viewBox="0 0 8 8"><path d="m1 1 6 6m0-6L1 7" stroke="#fff" strokeWidth="1.900" /></svg>
              </div>
            </div>
          </div>
          <Viewport />
          <div className={`flex h-4 shrink-0 bg-white text-[#444] ${MONO}`}>
            <div className="relative -mt-[2px] flex w-[100px] items-center justify-center border-b-2 border-r border-b-[#005587] border-r-[#8f8f8f] bg-white pt-[2px]">3D</div>
            <div className="flex h-[14px] items-center pl-[22px]">Schematic</div>
            <div className="ml-[23px] mt-[2px] h-[10px] w-px bg-[#999]" />
          </div>
          <div className="mt-[4px] flex h-[256px] shrink-0">
            <ParameterList />
            <div className="w-[4px] shrink-0" />
            <Progress />
          </div>
        </div>
      </div>
      <StatusBar />
      <div className="relative flex h-[8px] shrink-0 overflow-hidden bg-gradient-to-r from-[#20363f] to-[#15233f]">
        <div className="ml-[538px] h-[8px] w-[48px] bg-[#4c6067]" />
        <span className="ml-[1229px] mt-[3px] text-[12px] leading-[12px] text-white">10:22</span>
        <div className="ml-auto mr-[4px] h-[8px] w-px bg-[#7f8894]" />
      </div>
    </div>
  );
}
